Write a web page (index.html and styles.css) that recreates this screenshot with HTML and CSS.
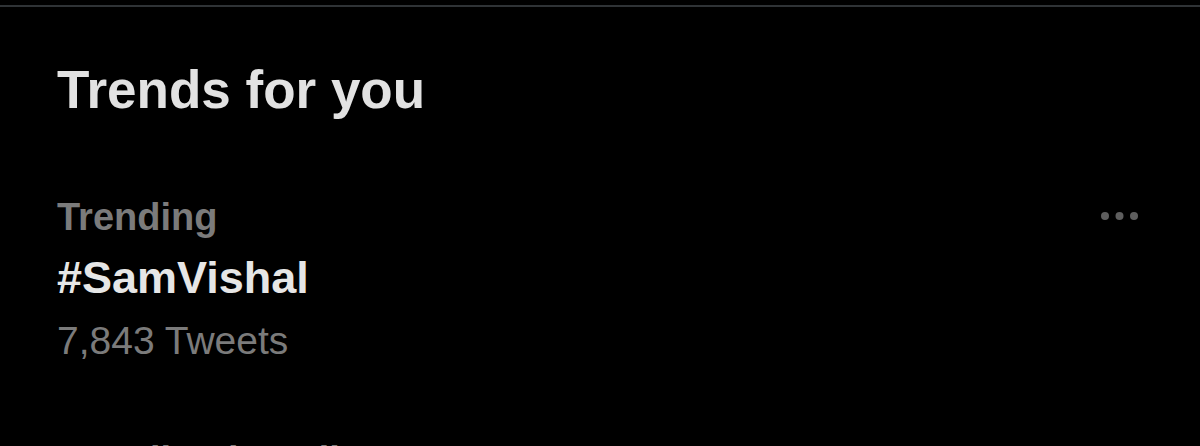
FILE: index.html
```html
<!DOCTYPE html>
<html lang="en">
<head>
    <meta charset="UTF-8">
    <meta name="viewport" content="width=device-width, initial-scale=1.0">
    <title>Trends for you</title>
    <link rel="stylesheet" href="styles.css">
</head>
<body>

<section class="trends-panel">
    <h2 class="trends-title">Trends for you</h2>

    <!-- Trend 1 -->
    <div class="trend">
        <div class="trend-info">
            <div class="trend-context">Trending</div>
            <div class="trend-name">#SamVishal</div>
            <div class="trend-count">7,843 Tweets</div>
        </div>
        <button type="button" class="more-btn" aria-label="More">
            <svg width="37" height="10" viewBox="0 0 37 10">
                <circle cx="4" cy="5" r="4"/>
                <circle cx="18.5" cy="5" r="4"/>
                <circle cx="33" cy="5" r="4"/>
            </svg>
        </button>
    </div>

    <!-- Trend 2 (cut off) -->
    <div class="trend">
        <div class="trend-info">
            <div class="trend-context">Trending in India</div>
        </div>
    </div>
</section>

</body>
</html>
```

FILE: styles.css
```css
body {
    margin: 0;
    background-color: #000;
    font-family: "Liberation Sans", Arial, sans-serif;
    overflow: hidden;
}
.trends-panel {
    margin-top: 5px;
    border-top: 2px solid #2f3336;
}
.trends-title {
    margin: 0;
    padding: 52px 57px 39px;
    font-size: 53px;
    line-height: 62px;
    font-weight: bold;
    color: #e2e2e2;
}
.trend {
    display: flex;
    justify-content: space-between;
    align-items: flex-start;
    padding: 34px 62px 38px 57px;
}
.trend-context {
    font-size: 38px;
    line-height: 46px;
    font-weight: bold;
    color: #7b7b7b;
}
.trend-name {
    margin-top: 11px;
    font-size: 45px;
    line-height: 54px;
    font-weight: bold;
    color: #e6e6e6;
}
.trend-count {
    margin-top: 12px;
    font-size: 39px;
    line-height: 48px;
    color: #7b7b7b;
}
.more-btn {
    margin-top: 17px;
    padding: 0;
    border: none;
    background: none;
    line-height: 0;
    cursor: pointer;
}
.more-btn svg {
    fill: #5e5e5e;
}
```
